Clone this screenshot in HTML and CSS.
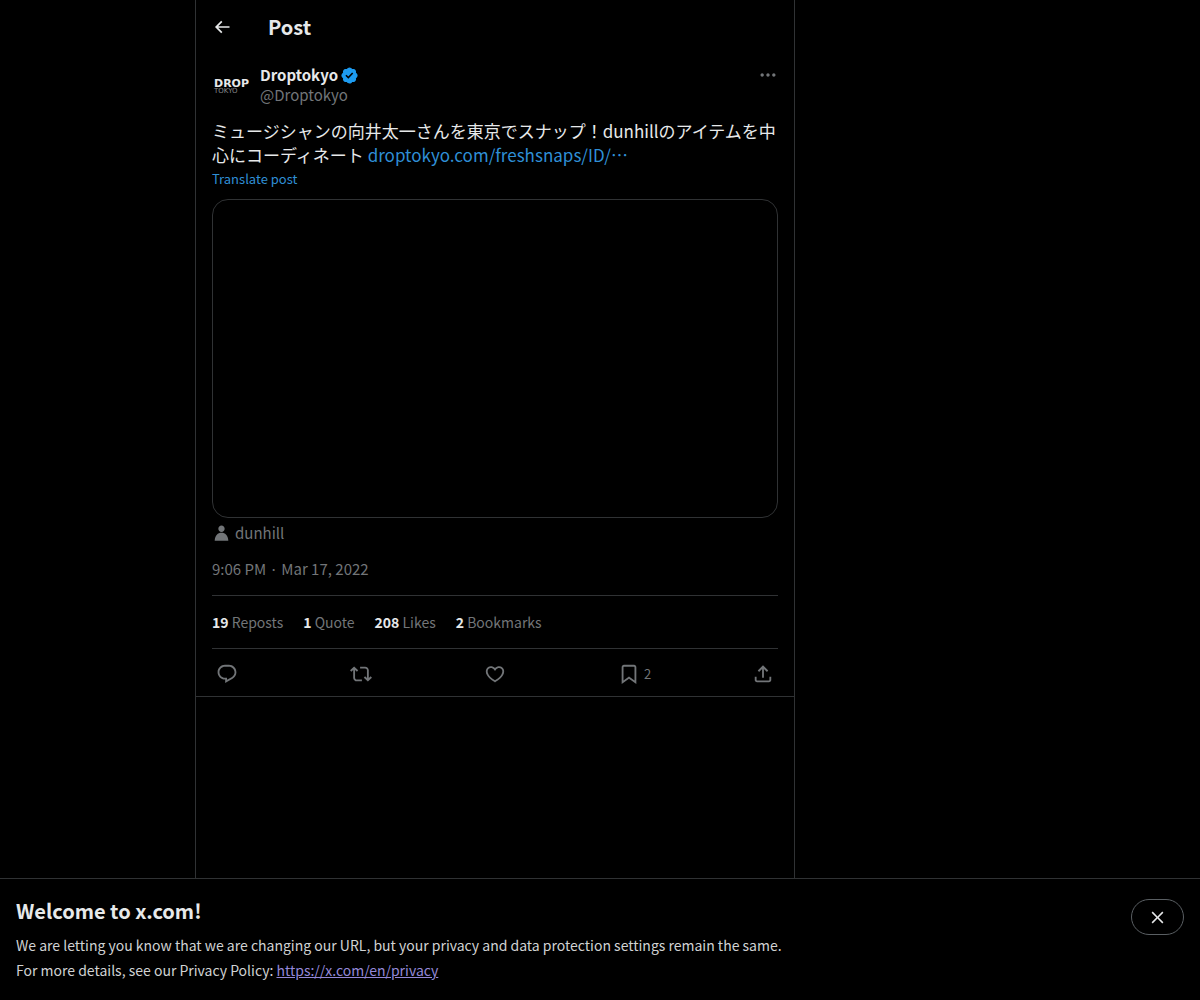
FILE: index.html
```html
<!DOCTYPE html>
<html lang="en">
<head>
<meta charset="utf-8">
<meta name="viewport" content="width=device-width, initial-scale=1">
<title>Droptokyo on X</title>
<link rel="stylesheet" href="styles.css">
</head>
<body>
<div class="layout">
  <main class="column">
    <header class="topbar">
      <button class="icon-button back" type="button" aria-label="Back"><svg class="icon icon-medium" viewBox="0 0 24 24"><path d="M7.414 13l5.043 5.04-1.414 1.42L3.586 12l7.457-7.46 1.414 1.42L7.414 11H21v2H7.414z"/></svg></button>
      <h1 class="title">Post</h1>
    </header>
    <article class="post">
      <div class="author">
        <a class="avatar" href="#"><span class="logo-drop">DROP</span><span class="logo-tokyo">TOKYO</span></a>
        <div class="names">
          <a class="name" href="#">Droptokyo<svg class="verified" viewBox="0 0 22 22" role="img" aria-label="Verified account"><path d="M20.396 11c-.018-.646-.215-1.275-.57-1.816-.354-.54-.852-.972-1.438-1.246.223-.607.27-1.264.14-1.897-.131-.634-.437-1.218-.882-1.687-.47-.445-1.053-.75-1.687-.882-.633-.13-1.29-.083-1.897.14-.273-.587-.704-1.086-1.245-1.44S11.647 1.62 11 1.604c-.646.017-1.273.213-1.813.568s-.969.854-1.24 1.44c-.608-.223-1.267-.272-1.902-.14-.635.13-1.22.436-1.69.882-.445.47-.749 1.055-.878 1.688-.13.633-.08 1.29.144 1.896-.587.274-1.087.705-1.443 1.245-.356.54-.555 1.17-.574 1.817.02.647.218 1.276.574 1.817.356.54.856.972 1.443 1.245-.224.606-.274 1.263-.144 1.896.13.634.433 1.218.877 1.688.47.443 1.054.747 1.687.878.633.132 1.29.084 1.897-.136.274.586.705 1.084 1.246 1.439.54.354 1.17.551 1.816.569.647-.016 1.276-.213 1.817-.567s.972-.854 1.245-1.44c.604.239 1.266.296 1.903.164.636-.132 1.22-.447 1.68-.907.46-.46.776-1.044.908-1.681s.075-1.299-.165-1.903c.586-.274 1.084-.705 1.439-1.246.354-.54.551-1.17.569-1.816zM9.662 14.85l-3.429-3.428 1.293-1.302 2.072 2.072 4.4-4.794 1.347 1.246z"/></svg></a>
          <a class="handle" href="#">@Droptokyo</a>
        </div>
        <button class="icon-button more" type="button" aria-label="More"><svg class="icon icon-medium" viewBox="0 0 24 24"><path d="M3 12c0-1.1.9-2 2-2s2 .9 2 2-.9 2-2 2-2-.9-2-2zm9 2c1.1 0 2-.9 2-2s-.9-2-2-2-2 .9-2 2 .9 2 2 2zm7 0c1.1 0 2-.9 2-2s-.9-2-2-2-2 .9-2 2 .9 2 2 2z"/></svg></button>
      </div>
      <p class="text" lang="ja">ミュージシャンの向井太一さんを東京でスナップ！dunhillのアイテムを中心にコーディネート <a class="link" href="#">droptokyo.com/freshsnaps/ID/…</a></p>
      <button class="translate" type="button">Translate post</button>
      <div class="media"></div>
      <a class="tagged" href="#"><svg class="icon icon-small" viewBox="0 0 24 24"><path d="M17.863 13.44c1.477 1.58 2.366 3.8 2.632 6.46l.11 1.1H3.395l.11-1.1c.266-2.66 1.155-4.88 2.632-6.46C7.627 11.85 9.648 11 12 11s4.373.85 5.863 2.44zM12 2C9.791 2 8 3.79 8 6s1.791 4 4 4 4-1.79 4-4-1.791-4-4-4z"/></svg>dunhill</a>
      <a class="date" href="#"><time datetime="2022-03-17T21:06">9:06 PM · Mar 17, 2022</time></a>
      <div class="stats">
        <a href="#"><b>19</b> Reposts</a>
        <a href="#"><b>1</b> Quote</a>
        <a href="#"><b>208</b> Likes</a>
        <span><b>2</b> Bookmarks</span>
      </div>
      <div class="actions">
        <button class="action" type="button" aria-label="Reply"><svg class="icon" viewBox="0 0 24 24"><path d="M1.751 10c0-4.42 3.584-8 8.005-8h4.366c4.49 0 8.129 3.64 8.129 8.13 0 2.96-1.607 5.68-4.196 7.11l-8.054 4.46v-3.69h-.067c-4.49.1-8.183-3.51-8.183-8.01zm8.005-6c-3.317 0-6.005 2.69-6.005 6 0 3.37 2.77 6.08 6.138 6.01l.351-.01h1.761v2.3l5.087-2.81c1.951-1.08 3.163-3.13 3.163-5.36 0-3.39-2.744-6.13-6.129-6.13H9.756z"/></svg></button>
        <button class="action" type="button" aria-label="Repost"><svg class="icon" viewBox="0 0 24 24"><path d="M4.5 3.88l4.432 4.14-1.364 1.46L5.5 7.55V16c0 1.1.896 2 2 2H13v2H7.5c-2.209 0-4-1.79-4-4V7.55L1.432 9.48.068 8.02 4.5 3.88zM16.5 6H11V4h5.5c2.209 0 4 1.79 4 4v8.45l2.068-1.93 1.364 1.46-4.432 4.14-4.432-4.14 1.364-1.46 2.068 1.93V8c0-1.1-.896-2-2-2z"/></svg></button>
        <button class="action" type="button" aria-label="Like"><svg class="icon" viewBox="0 0 24 24"><path d="M16.697 5.5c-1.222-.06-2.679.51-3.89 2.16l-.805 1.09-.806-1.09C9.984 6.01 8.526 5.44 7.304 5.5c-1.243.07-2.349.78-2.91 1.91-.552 1.12-.633 2.78.479 4.82 1.074 1.97 3.257 4.27 7.129 6.61 3.87-2.34 6.052-4.64 7.126-6.61 1.111-2.04 1.03-3.7.477-4.82-.561-1.13-1.666-1.84-2.908-1.91zm4.187 7.69c-1.351 2.48-4.001 5.12-8.379 7.67l-.503.3-.504-.3c-4.379-2.55-7.029-5.19-8.382-7.67-1.36-2.5-1.41-4.86-.514-6.67.887-1.79 2.647-2.91 4.601-3.01 1.651-.09 3.368.56 4.798 2.01 1.429-1.45 3.146-2.1 4.796-2.01 1.954.1 3.714 1.22 4.601 3.01.896 1.81.846 4.17-.514 6.67z"/></svg></button>
        <button class="action" type="button" aria-label="2 Bookmarks. Bookmark"><svg class="icon" viewBox="0 0 24 24"><path d="M4 4.5C4 3.12 5.119 2 6.5 2h11C18.881 2 20 3.12 20 4.5v18.44l-8-5.71-8 5.71V4.5zM6.5 4c-.276 0-.5.22-.5.5v14.56l6-4.29 6 4.29V4.5c0-.28-.224-.5-.5-.5h-11z"/></svg>2</button>
        <button class="action share" type="button" aria-label="Share post"><svg class="icon" viewBox="0 0 24 24"><path d="M12 2.59l5.7 5.7-1.41 1.42L13 6.41V16h-2V6.41l-3.3 3.3-1.41-1.42L12 2.59zM21 15l-.02 3.51c0 1.38-1.12 2.49-2.5 2.49H5.5C4.11 21 3 19.88 3 18.5V15h2v3.5c0 .28.22.5.5.5h12.98c.28 0 .5-.22.5-.5L19 15h2z"/></svg></button>
      </div>
    </article>
  </main>
</div>
<section class="notice" aria-labelledby="notice-title">
  <div class="notice-body">
    <h2 class="title" id="notice-title">Welcome to x.com!</h2>
    <p class="notice-text">We are letting you know that we are changing our URL, but your privacy and data protection settings remain the same.<br>For more details, see our Privacy Policy: <a href="https://x.com/en/privacy">https://x.com/en/privacy</a></p>
  </div>
  <button class="close" type="button" aria-label="Close"><svg class="icon icon-small" viewBox="0 0 24 24"><path d="M10.59 12L4.54 5.96l1.42-1.42L12 10.59l6.04-6.05 1.42 1.42L13.41 12l6.05 6.04-1.42 1.42L12 13.41l-6.04 6.05-1.42-1.42L10.59 12z"/></svg></button>
</section>
</body>
</html>
```

FILE: styles.css
```css
:root {
  --line: #303234;
  --muted: #727578;
  --bright: #e7e9ea;
  --blue: #1d9bf0;
  --link: #2f8fd6;
}

* {
  box-sizing: border-box;
}

body {
  display: flex;
  flex-direction: column;
  min-height: 100vh;
  margin: 0;
  background: #000;
  color: var(--bright);
  font: 15px/20px "Noto Sans CJK JP", sans-serif;
}

a {
  color: inherit;
  text-decoration: none;
}

button {
  padding: 0;
  border: 0;
  background: none;
  color: inherit;
  font: inherit;
  cursor: pointer;
}

.icon {
  flex: none;
  display: block;
  width: 22px;
  height: 22px;
  fill: currentColor;
}

.icon-medium {
  width: 20px;
  height: 20px;
}

.icon-small {
  width: 19px;
  height: 19px;
}

.layout {
  flex: 1;
  display: grid;
  grid-template-columns: minmax(0, 195fr) minmax(0, 600px) minmax(0, 405fr);
}

.column {
  grid-column: 2;
  border: solid var(--line);
  border-width: 0 1px;
}

.topbar {
  display: flex;
  align-items: center;
  height: 53px;
  padding: 0 16px;
}

.back {
  width: 56px;
}

.title {
  margin: 0;
  font-size: 20px;
  line-height: 24px;
  font-weight: 700;
}

.post {
  display: flex;
  flex-direction: column;
  align-items: stretch;
  padding: 12px 16px 0;
  border-bottom: 1px solid var(--line);
}

.author {
  display: flex;
  align-items: flex-start;
  gap: 8px;
}

.avatar {
  display: flex;
  flex-direction: column;
  justify-content: center;
  width: 40px;
  height: 40px;
  padding: 2px 0 0 2px;
  font-family: "DejaVu Sans", sans-serif;
}

.logo-drop {
  font-size: 11px;
  line-height: 9px;
  font-weight: 700;
}

.logo-tokyo {
  color: #85888a;
  font-size: 7px;
  line-height: 6px;
}

.names {
  flex: 1;
  display: flex;
  flex-direction: column;
  align-items: flex-start;
}

.name {
  display: flex;
  align-items: center;
  gap: 2px;
  font-weight: 700;
}

.verified {
  width: 19px;
  height: 19px;
  fill: var(--blue);
}

.handle,
.tagged,
.date {
  color: var(--muted);
}

.more {
  color: var(--muted);
}

.text {
  margin: 14px 0 4px;
  font-size: 17px;
  line-height: 24px;
}

.link,
.translate {
  color: var(--link);
}

.translate {
  align-self: flex-start;
  font-size: 13px;
  line-height: 16px;
}

.media {
  margin-top: 12px;
  aspect-ratio: 566 / 319;
  border: 1px solid var(--line);
  border-radius: 16px;
}

.tagged {
  display: flex;
  align-items: center;
  gap: 4px;
  margin-top: 5px;
}

.date {
  padding: 16px 0;
}

.stats {
  display: flex;
  gap: 20px;
  padding: 16px 0;
  border: solid var(--line);
  border-width: 1px 0;
  color: var(--muted);
  font-size: 14px;
}

.stats b {
  color: var(--bright);
}

.actions {
  display: flex;
  height: 47px;
  padding: 2px 4px 0;
  color: var(--muted);
  font-size: 13px;
}

.action {
  flex: 1;
  display: flex;
  align-items: center;
  gap: 4px;
}

.share {
  flex: none;
}

.notice {
  display: flex;
  align-items: flex-start;
  justify-content: space-between;
  gap: 16px;
  padding: 20px 16px 17px;
  border-top: 1px solid var(--line);
}

.notice-text {
  margin: 10px 0 0;
  color: #d0d2d3;
  font-size: 14px;
  line-height: 25px;
}

.notice-text a {
  color: #9488d8;
  text-decoration: underline;
}

.close {
  flex: none;
  display: flex;
  align-items: center;
  justify-content: center;
  width: 53px;
  height: 36px;
  border: 1px solid #5a5f63;
  border-radius: 18px;
}
```
